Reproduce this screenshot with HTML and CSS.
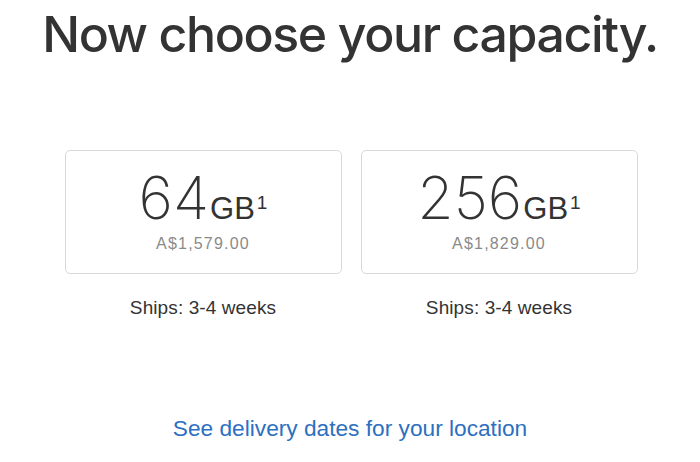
FILE: index.html
```html
<!DOCTYPE html>
<html>
<head>
<meta charset="utf-8">
<link rel="stylesheet" href="styles.css">
</head>
<body>
<main class="page">
  <h1 class="title">Now choose your capacity.</h1>
  <div class="options">
    <div class="option">
      <div class="card">
        <div class="size"><span class="num">64</span><span class="unit">GB</span><sup class="fn">1</sup></div>
        <div class="price">A$1,579.00</div>
      </div>
      <div class="ships">Ships: 3-4 weeks</div>
    </div>
    <div class="option">
      <div class="card">
        <div class="size"><span class="num">256</span><span class="unit">GB</span><sup class="fn">1</sup></div>
        <div class="price">A$1,829.00</div>
      </div>
      <div class="ships">Ships: 3-4 weeks</div>
    </div>
  </div>
  <a class="delivery" href="#">See delivery dates for your location</a>
</main>
</body>
</html>
```
FILE: styles.css
```css
html, body {
  margin: 0;
  padding: 0;
  background: #fff;
}
.page {
  width: 700px;
  height: 462px;
  display: flex;
  flex-direction: column;
  align-items: center;
  font-family: "Liberation Sans", Arial, sans-serif;
  color: #333;
}
.title {
  margin: 0;
  padding-top: 4px;
  font-family: "Inter", "Liberation Sans", sans-serif;
  font-size: 50px;
  font-weight: 500;
  line-height: 60px;
  color: #333;
  letter-spacing: -1.4px;
}
.options {
  display: flex;
  gap: 19px;
  margin-top: 86px;
  padding-left: 2px;
}
.option {
  width: 277px;
  display: flex;
  flex-direction: column;
  align-items: center;
}
.card {
  width: 277px;
  height: 124px;
  box-sizing: border-box;
  border: 1px solid #d9d9d9;
  border-radius: 5px;
  display: flex;
  flex-direction: column;
  align-items: center;
  padding-top: 17px;
}
.size {
  height: 60px;
  line-height: 60px;
  font-family: "Inter", "Liberation Sans", sans-serif;
  font-size: 59px;
  font-weight: 200;
  color: #333;
  white-space: nowrap;
}
.num {
  letter-spacing: 0;
}
.unit {
  font-family: "Liberation Sans", Arial, sans-serif;
  font-weight: 400;
  font-size: 31px;
  margin-left: 1px;
}
.fn {
  font-family: "Liberation Sans", Arial, sans-serif;
  font-weight: 400;
  font-size: 19px;
  line-height: 1;
  vertical-align: 10px;
  margin-left: 2px;
}
.price {
  margin-top: 6px;
  font-size: 16px;
  line-height: 20px;
  letter-spacing: 1.2px;
  color: #8a8a8a;
}
.ships {
  margin-top: 22px;
  font-size: 19px;
  line-height: 24px;
  letter-spacing: 0.1px;
  color: #333;
}
.delivery {
  margin-top: 94px;
  font-size: 22.7px;
  line-height: 28px;
  color: #2d6fc0;
  text-decoration: none;
}
```
